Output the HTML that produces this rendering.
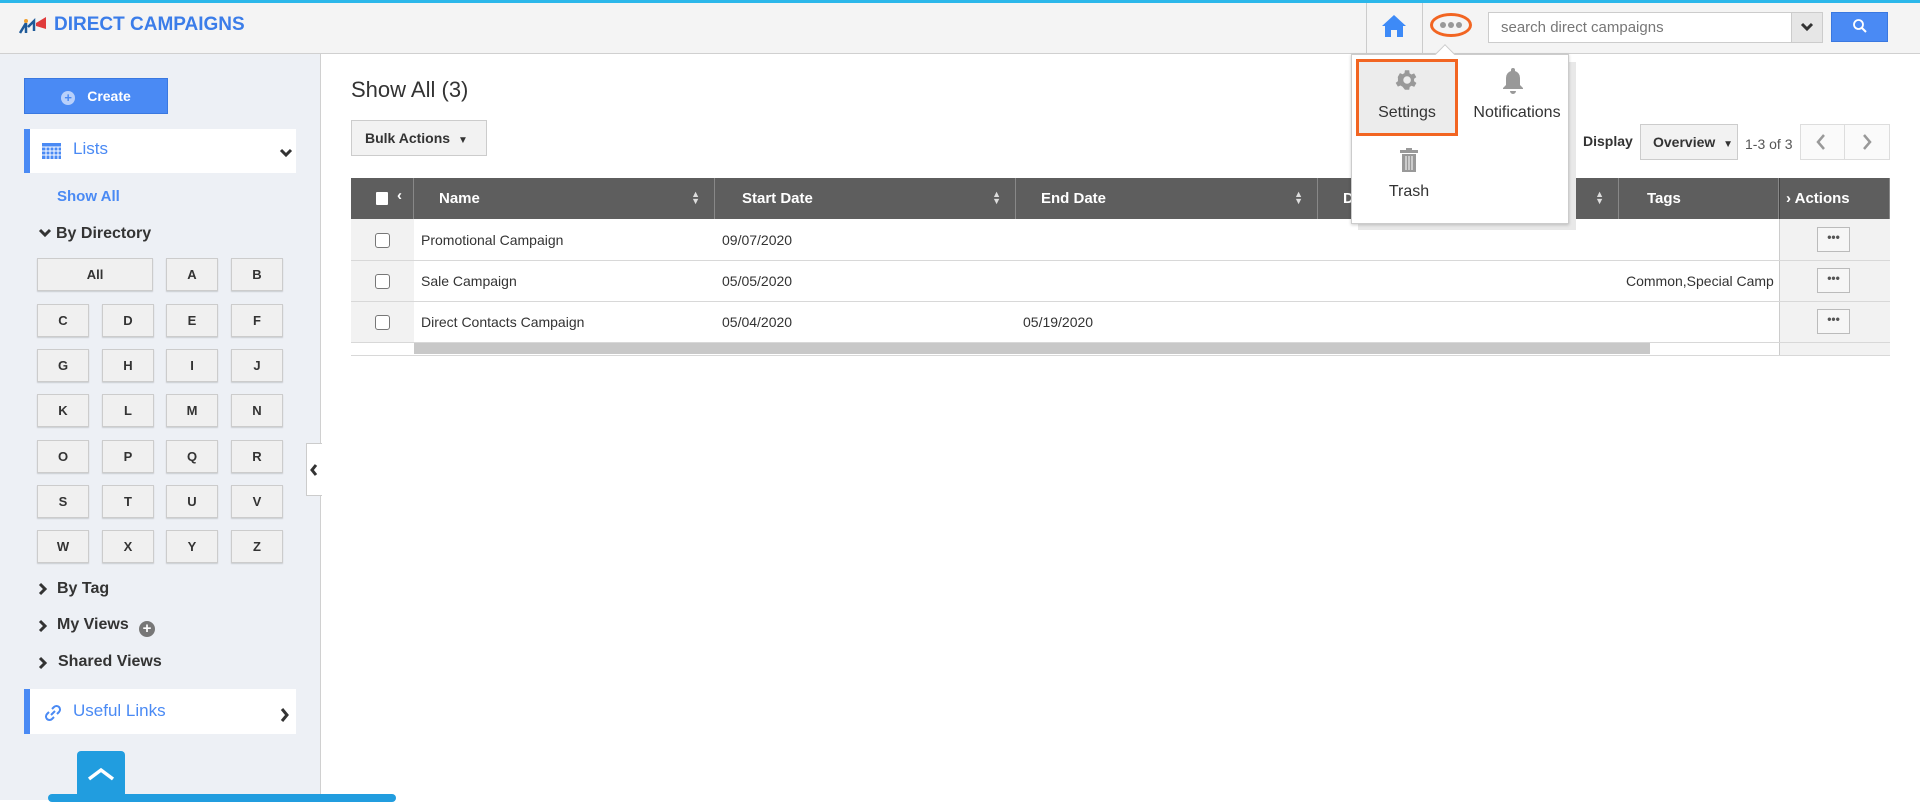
<!DOCTYPE html>
<html><head><meta charset="utf-8"><style>
*{box-sizing:border-box;margin:0;padding:0}
body{width:1920px;height:800px;overflow:hidden;font-family:"Liberation Sans",Arial,sans-serif;background:#fff;position:relative;color:#333}
.a{position:absolute}
.top{left:0;top:0;width:1920px;height:54px;background:#f4f4f4;border-top:3px solid #2bb7ea;border-bottom:1px solid #d0d0d0}
.side{left:0;top:54px;width:321px;height:746px;background:#edf0f5;border-right:1px solid #d0d0d0}
.lb{background:#f0f0f0;border:1px solid #ccc;box-shadow:0 1px 1px rgba(0,0,0,.15);font-size:13px;font-weight:bold;color:#333;text-align:center;line-height:31px;height:33px}
.nav{font-size:15px;font-weight:bold;color:#333}
.th{top:178px;height:41px;background:#5e5e5e;color:#fff;font-weight:bold;font-size:15px;line-height:41px;border-right:1px solid #888}
.cell{font-size:14px;color:#333;line-height:41px}
.hl{left:351px;width:1539px;height:1px;background:#d8d8d8}
.cb{width:15px;height:15px;border:1px solid #777;border-radius:3px;background:#fff}
.dots{left:1817px;width:33px;height:25px;border:1px solid #bbb;background:#f6f6f6;font-size:12px;text-align:center;line-height:18px;font-weight:bold;color:#555}
.sort{font-size:9px;line-height:7px;color:#ddd}
</style></head><body>
<div class="a top"></div>
<!-- logo -->
<svg class="a" style="left:18px;top:15px" width="32" height="20" viewBox="0 0 32 20"><path d="M2 18 L8 8 M8 8 L8 18 M10 12 L16 6 L16 16" stroke="#1f5a99" stroke-width="2.5" fill="none"/><circle cx="8" cy="6" r="2" fill="#f0a030"/><path d="M18 8 L28 2 L28 14 L18 11 Z" fill="#e03b3b"/></svg>
<div class="a" style="left:54px;top:14px;font-size:19px;font-weight:bold;color:#3b7de9">DIRECT CAMPAIGNS</div>
<!-- right header -->
<div class="a" style="left:1366px;top:3px;width:57px;height:50px;border-left:1px solid #ccc;border-right:1px solid #ccc"></div>
<svg class="a" style="left:1381px;top:14px" width="26" height="24" viewBox="0 0 26 24"><path d="M13 1 L1 12 L4 12 L4 23 L10 23 L10 16 L16 16 L16 23 L22 23 L22 12 L25 12 Z" fill="#3d8af7"/></svg>
<div class="a" style="left:1430px;top:13px;width:42px;height:24px;border:3px solid #f26522;border-radius:50%"></div>
<div class="a" style="left:1440px;top:22px;width:6px;height:6px;border-radius:3px;background:#999;box-shadow:8px 0 #999,16px 0 #999"></div>
<div class="a" style="left:1488px;top:12px;width:304px;height:31px;border:1px solid #ccc;background:#fff;font-size:15px;color:#777;line-height:29px;padding-left:12px">search direct campaigns</div>
<div class="a" style="left:1791px;top:12px;width:32px;height:31px;border:1px solid #ccc;background:#e6e6e6"></div>
<svg class="a" style="left:1800px;top:22px" width="14" height="10" viewBox="0 0 14 10"><path d="M2 2 L7 7 L12 2" stroke="#333" stroke-width="3" fill="none"/></svg>
<div class="a" style="left:1831px;top:12px;width:57px;height:30px;background:#4a8af4;border:1px solid #3a78e0"></div>
<svg class="a" style="left:1852px;top:18px" width="16" height="16" viewBox="0 0 16 16"><circle cx="6.5" cy="6.5" r="4.5" stroke="#fff" stroke-width="1.8" fill="none"/><path d="M10 10 L14 14" stroke="#fff" stroke-width="2"/></svg>
<!-- sidebar -->
<div class="a side"></div>
<div class="a" style="left:24px;top:78px;width:144px;height:36px;background:#4a8af4;border:1px solid #3a78e0;color:#fff;font-weight:bold;font-size:14px;line-height:34px;text-align:center"><span style="display:inline-block;width:14px;height:14px;border-radius:7px;background:#b8d0fb;color:#4a8af4;font-size:13px;line-height:14px;margin-right:12px;vertical-align:-1px">+</span>Create</div>
<div class="a" style="left:24px;top:129px;width:272px;height:44px;background:#fff;border-left:6px solid #4a8af4"></div>
<svg class="a" style="left:42px;top:143px" width="19" height="16" viewBox="0 0 19 16"><rect x="0" y="0" width="19" height="16" fill="#4a8af4"/><path d="M0 4 H19 M0 8 H19 M0 12 H19 M4 4 V16 M8 4 V16 M12 4 V16 M16 4 V16" stroke="#fff" stroke-width="1"/></svg>
<div class="a" style="left:73px;top:139px;font-size:17px;color:#4a8af4">Lists</div>
<svg class="a" style="left:279px;top:148px" width="14" height="10" viewBox="0 0 14 10"><path d="M2 2 L7 7 L12 2" stroke="#333" stroke-width="3" fill="none"/></svg>
<div class="a" style="left:57px;top:188px;font-size:15px;font-weight:bold;color:#4a8af4">Show All</div>
<svg class="a" style="left:38px;top:228px" width="14" height="10" viewBox="0 0 14 10"><path d="M2 2 L7 7 L12 2" stroke="#333" stroke-width="3" fill="none"/></svg>
<div class="a nav" style="left:56px;top:225px;font-size:16px">By Directory</div>
<div class="a lb" style="left:37px;top:258px;width:116px">All</div>
<div class="a lb" style="left:166px;top:258px;width:52px">A</div>
<div class="a lb" style="left:231px;top:258px;width:52px">B</div>
<div class="a lb" style="left:37px;top:304px;width:52px">C</div><div class="a lb" style="left:102px;top:304px;width:52px">D</div><div class="a lb" style="left:166px;top:304px;width:52px">E</div><div class="a lb" style="left:231px;top:304px;width:52px">F</div>
<div class="a lb" style="left:37px;top:349px;width:52px">G</div><div class="a lb" style="left:102px;top:349px;width:52px">H</div><div class="a lb" style="left:166px;top:349px;width:52px">I</div><div class="a lb" style="left:231px;top:349px;width:52px">J</div>
<div class="a lb" style="left:37px;top:394px;width:52px">K</div><div class="a lb" style="left:102px;top:394px;width:52px">L</div><div class="a lb" style="left:166px;top:394px;width:52px">M</div><div class="a lb" style="left:231px;top:394px;width:52px">N</div>
<div class="a lb" style="left:37px;top:440px;width:52px">O</div><div class="a lb" style="left:102px;top:440px;width:52px">P</div><div class="a lb" style="left:166px;top:440px;width:52px">Q</div><div class="a lb" style="left:231px;top:440px;width:52px">R</div>
<div class="a lb" style="left:37px;top:485px;width:52px">S</div><div class="a lb" style="left:102px;top:485px;width:52px">T</div><div class="a lb" style="left:166px;top:485px;width:52px">U</div><div class="a lb" style="left:231px;top:485px;width:52px">V</div>
<div class="a lb" style="left:37px;top:530px;width:52px">W</div><div class="a lb" style="left:102px;top:530px;width:52px">X</div><div class="a lb" style="left:166px;top:530px;width:52px">Y</div><div class="a lb" style="left:231px;top:530px;width:52px">Z</div>
<svg class="a" style="left:38px;top:582px" width="10" height="14" viewBox="0 0 10 14"><path d="M2 2 L7 7 L2 12" stroke="#333" stroke-width="3" fill="none"/></svg>
<div class="a nav" style="left:57px;top:580px;font-size:16px">By Tag</div>
<svg class="a" style="left:38px;top:619px" width="10" height="14" viewBox="0 0 10 14"><path d="M2 2 L7 7 L2 12" stroke="#333" stroke-width="3" fill="none"/></svg>
<div class="a nav" style="left:57px;top:616px;font-size:16px">My Views</div>
<div class="a" style="left:139px;top:621px;width:16px;height:16px;border-radius:8px;background:#777;color:#fff;font-size:15px;font-weight:bold;text-align:center;line-height:16px">+</div>
<svg class="a" style="left:38px;top:656px" width="10" height="14" viewBox="0 0 10 14"><path d="M2 2 L7 7 L2 12" stroke="#333" stroke-width="3" fill="none"/></svg>
<div class="a nav" style="left:58px;top:653px;font-size:16px">Shared Views</div>
<div class="a" style="left:24px;top:689px;width:272px;height:45px;background:#fff;border-left:6px solid #4a8af4"></div>
<svg class="a" style="left:44px;top:704px" width="18" height="18" viewBox="0 0 18 18"><path d="M7 11 L11 7 M8 5 L10 3 A3 3 0 0 1 15 8 L13 10 M10 13 L8 15 A3 3 0 0 1 3 10 L5 8" stroke="#4a8af4" stroke-width="2" fill="none"/></svg>
<div class="a" style="left:73px;top:701px;font-size:17px;color:#4a8af4">Useful Links</div>
<svg class="a" style="left:280px;top:707px" width="10" height="16" viewBox="0 0 10 16"><path d="M2 2 L7 8 L2 14" stroke="#333" stroke-width="3" fill="none"/></svg>
<div class="a" style="left:77px;top:751px;width:48px;height:49px;background:#219ddf;border-radius:4px 4px 0 0"></div>
<svg class="a" style="left:86px;top:766px" width="30" height="16" viewBox="0 0 30 16"><path d="M3 13 L15 4 L27 13" stroke="#fff" stroke-width="3.5" fill="none"/></svg>
<div class="a" style="left:48px;top:794px;width:348px;height:8px;background:#219ddf;border-radius:5px"></div>
<div class="a" style="left:306px;top:443px;width:16px;height:53px;background:#fff;border:1px solid #ccc;border-right:none"></div>
<svg class="a" style="left:309px;top:463px" width="10" height="14" viewBox="0 0 10 14"><path d="M7 2 L3 7 L7 12" stroke="#333" stroke-width="3" fill="none"/></svg>
<!-- main -->
<div class="a" style="left:351px;top:77px;font-size:22px;color:#333">Show All (3)</div>
<div class="a" style="left:351px;top:120px;width:136px;height:36px;background:#f2f2f2;border:1px solid #ccc;font-size:14px;font-weight:bold;line-height:34px;padding-left:13px">Bulk Actions <span style="font-size:10px;margin-left:4px">▼</span></div>
<div class="a" style="left:1583px;top:133px;font-size:14px;font-weight:bold">Display</div>
<div class="a" style="left:1640px;top:124px;width:98px;height:36px;background:#f2f2f2;border:1px solid #ccc;font-size:14px;font-weight:bold;line-height:34px;padding-left:12px">Overview <span style="font-size:10px;margin-left:4px">▼</span></div>
<div class="a" style="left:1745px;top:136px;font-size:14px;color:#555">1-3 of 3</div>
<div class="a" style="left:1800px;top:124px;width:90px;height:36px;border:1px solid #ddd;background:#fafafa"></div>
<div class="a" style="left:1844px;top:125px;width:1px;height:34px;background:#ddd"></div>
<svg class="a" style="left:1815px;top:133px" width="12" height="18" viewBox="0 0 12 18"><path d="M9 2 L3 9 L9 16" stroke="#999" stroke-width="2.5" fill="none"/></svg>
<svg class="a" style="left:1861px;top:133px" width="12" height="18" viewBox="0 0 12 18"><path d="M3 2 L9 9 L3 16" stroke="#999" stroke-width="2.5" fill="none"/></svg>
<!-- table header -->
<div class="a th" style="left:351px;width:63px"></div>
<div class="a" style="left:376px;top:192px;width:12px;height:13px;background:#fff;border-radius:1px"></div>
<div class="a" style="left:397px;top:178px;color:#fff;font-weight:bold;font-size:15px;line-height:36px">‹</div>
<div class="a th" style="left:414px;width:301px;padding-left:25px">Name<span class="a sort" style="right:14px;top:13px">▲<br>▼</span></div>
<div class="a th" style="left:715px;width:301px;padding-left:27px">Start Date<span class="a sort" style="right:14px;top:13px">▲<br>▼</span></div>
<div class="a th" style="left:1016px;width:302px;padding-left:25px">End Date<span class="a sort" style="right:14px;top:13px">▲<br>▼</span></div>
<div class="a th" style="left:1318px;width:301px;padding-left:25px">D<span class="a sort" style="right:14px;top:13px">▲<br>▼</span></div>
<div class="a th" style="left:1619px;width:160px;padding-left:28px">Tags</div>
<div class="a th" style="left:1779px;width:111px;padding-left:6px;border-left:1px solid #444">› Actions</div>
<!-- rows -->
<div class="a" style="left:351px;top:219px;width:63px;height:124px;background:#f2f2f2"></div>
<div class="a" style="left:1779px;top:219px;width:111px;height:136px;background:#f2f2f2;border-left:1px solid #ccc"></div>
<div class="a hl" style="top:260px"></div><div class="a hl" style="top:301px"></div><div class="a hl" style="top:342px"></div><div class="a hl" style="top:355px"></div>
<div class="a cb" style="left:375px;top:233px"></div><div class="a cb" style="left:375px;top:274px"></div><div class="a cb" style="left:375px;top:315px"></div>
<div class="a cell" style="left:421px;top:220px">Promotional Campaign</div>
<div class="a cell" style="left:722px;top:220px">09/07/2020</div>
<div class="a cell" style="left:421px;top:261px">Sale Campaign</div>
<div class="a cell" style="left:722px;top:261px">05/05/2020</div>
<div class="a cell" style="left:1626px;top:261px;width:153px;overflow:hidden;white-space:nowrap">Common,Special Camp</div>
<div class="a cell" style="left:421px;top:302px">Direct Contacts Campaign</div>
<div class="a cell" style="left:722px;top:302px">05/04/2020</div>
<div class="a cell" style="left:1023px;top:302px">05/19/2020</div>
<div class="a dots" style="top:227px">•••</div><div class="a dots" style="top:268px">•••</div><div class="a dots" style="top:309px">•••</div>
<div class="a" style="left:414px;top:343px;width:1236px;height:11px;background:#c8c8c8"></div>
<!-- dropdown menu -->
<div class="a" style="left:1358px;top:62px;width:218px;height:168px;background:#e8e8e8"></div>
<div class="a" style="left:1351px;top:54px;width:218px;height:170px;background:#fff;border:1px solid #ccc;box-shadow:0 1px 3px rgba(0,0,0,.2)"></div>
<div class="a" style="left:1438px;top:47px;width:14px;height:14px;background:#fff;border-left:1px solid #ccc;border-top:1px solid #ccc;transform:rotate(45deg)"></div>
<div class="a" style="left:1356px;top:59px;width:102px;height:77px;background:#ececec;border:3px solid #f26522"></div>
<svg class="a" style="left:1393px;top:67px" width="26" height="26" viewBox="0 0 24 24"><path fill="#999" d="M19.4 13a7.5 7.5 0 0 0 0-2l2.1-1.6-2-3.5-2.5 1a7 7 0 0 0-1.7-1L15 3h-4l-.4 2.7a7 7 0 0 0-1.7 1l-2.5-1-2 3.5L4.6 11a7.5 7.5 0 0 0 0 2l-2.1 1.6 2 3.5 2.5-1a7 7 0 0 0 1.7 1L11 21h4l.4-2.7a7 7 0 0 0 1.7-1l2.5 1 2-3.5zM13 15.5A3.5 3.5 0 1 1 13 8.5a3.5 3.5 0 0 1 0 7z"/></svg>
<div class="a" style="left:1356px;top:104px;width:102px;text-align:center;font-size:16px;color:#333">Settings</div>
<svg class="a" style="left:1501px;top:67px" width="24" height="28" viewBox="0 0 24 28"><path fill="#999" d="M12 1a2 2 0 0 1 2 2v1a7 7 0 0 1 5 7v7l3 3v1H2v-1l3-3v-7a7 7 0 0 1 5-7V3a2 2 0 0 1 2-2zM9 24h6a3 3 0 0 1-6 0z"/></svg>
<div class="a" style="left:1462px;top:104px;width:110px;text-align:center;font-size:16px;color:#333">Notifications</div>
<svg class="a" style="left:1399px;top:148px" width="20" height="24" viewBox="0 0 20 24"><rect x="7" y="0" width="6" height="2" fill="#999"/><rect x="1" y="2" width="18" height="3" fill="#999"/><rect x="3" y="6" width="14" height="18" fill="#999"/><path d="M7 8 V22 M10 8 V22 M13 8 V22" stroke="#fff" stroke-width="1"/></svg>
<div class="a" style="left:1358px;top:183px;width:102px;text-align:center;font-size:16px;color:#333">Trash</div>
</body></html>
